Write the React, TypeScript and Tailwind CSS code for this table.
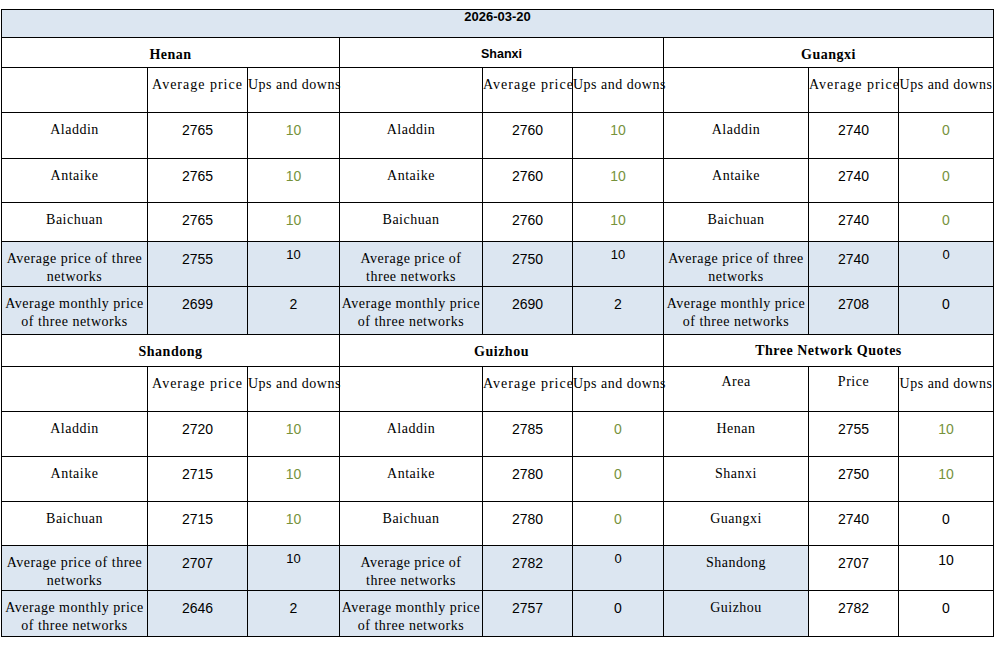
import type { ReactNode } from "react";

type Brand = { name: string; price: number; change: number; green: boolean };
type Region = {
    name: string;
    sans?: boolean;
    brands: Brand[];
    avg: { price: number; change: number };
    monthly: { price: number; change: number };
    avgLines: [string, string];
};

// SimSun-ish look: serif text spread a little
const serif = "font-['Liberation_Serif','Times_New_Roman',serif] text-[14px] leading-[18px] tracking-[0.5px]";
const num = "font-['Liberation_Sans',Arial,sans-serif] text-[14px] leading-[18px]";
const blue = "bg-[#dce6f1]";
const green = "text-[#76923c]";

const wide: [string, string] = ["Average price of three", "networks"];
const narrow: [string, string] = ["Average price of", "three networks"];

const top: Region[] = [
    {
        name: "Henan",
        brands: [
            { name: "Aladdin", price: 2765, change: 10, green: true },
            { name: "Antaike", price: 2765, change: 10, green: true },
            { name: "Baichuan", price: 2765, change: 10, green: true },
        ],
        avg: { price: 2755, change: 10 },
        monthly: { price: 2699, change: 2 },
        avgLines: wide,
    },
    {
        name: "Shanxi",
        sans: true,
        brands: [
            { name: "Aladdin", price: 2760, change: 10, green: true },
            { name: "Antaike", price: 2760, change: 10, green: true },
            { name: "Baichuan", price: 2760, change: 10, green: true },
        ],
        avg: { price: 2750, change: 10 },
        monthly: { price: 2690, change: 2 },
        avgLines: narrow,
    },
    {
        name: "Guangxi",
        brands: [
            { name: "Aladdin", price: 2740, change: 0, green: true },
            { name: "Antaike", price: 2740, change: 0, green: true },
            { name: "Baichuan", price: 2740, change: 0, green: true },
        ],
        avg: { price: 2740, change: 0 },
        monthly: { price: 2708, change: 0 },
        avgLines: wide,
    },
];

const bottom: Region[] = [
    {
        name: "Shandong",
        brands: [
            { name: "Aladdin", price: 2720, change: 10, green: true },
            { name: "Antaike", price: 2715, change: 10, green: true },
            { name: "Baichuan", price: 2715, change: 10, green: true },
        ],
        avg: { price: 2707, change: 10 },
        monthly: { price: 2646, change: 2 },
        avgLines: wide,
    },
    {
        name: "Guizhou",
        brands: [
            { name: "Aladdin", price: 2785, change: 0, green: true },
            { name: "Antaike", price: 2780, change: 0, green: true },
            { name: "Baichuan", price: 2780, change: 0, green: true },
        ],
        avg: { price: 2782, change: 0 },
        monthly: { price: 2757, change: 0 },
        avgLines: narrow,
    },
];

const quotes = [
    { area: "Henan", price: 2755, change: 10, green: true, shaded: false },
    { area: "Shanxi", price: 2750, change: 10, green: true, shaded: false },
    { area: "Guangxi", price: 2740, change: 0, green: false, shaded: false },
    { area: "Shandong", price: 2707, change: 10, green: false, shaded: true },
    { area: "Guizhou", price: 2782, change: 0, green: false, shaded: true },
];

function Td({ className = "", children, colSpan }: { className?: string; children?: ReactNode; colSpan?: number }) {
    return (
        <td colSpan={colSpan} className={`border border-black p-0 align-top text-center whitespace-nowrap ${className}`}>
            {children}
        </td>
    );
}

function Label({ children, shade = false }: { children: ReactNode; shade?: boolean }) {
    return <Td className={`${serif} pt-[8px] ${shade ? blue : ""}`}>{children}</Td>;
}

function Num({ children, shade = false, color = "" }: { children: ReactNode; shade?: boolean; color?: string }) {
    return <Td className={`${num} pt-[8px] ${color} ${shade ? blue : ""}`}>{children}</Td>;
}

function RegionHead({ r }: { r: Region }) {
    return (
        <Td
            colSpan={3}
            className={
                r.sans
                    ? "font-['Liberation_Sans',Arial,sans-serif] text-[12.5px] font-bold leading-[18px] pt-[7px]"
                    : `${serif} font-bold pt-[8px]`
            }
        >
            {r.name}
        </Td>
    );
}

function SubHead() {
    return (
        <>
            <Td />
            <Td className={`${serif} tracking-[1px] pt-[8px]`}>Average price</Td>
            <Label>Ups and downs</Label>
        </>
    );
}

function TwoLines({ lines, shade }: { lines: [string, string]; shade?: boolean }) {
    return (
        <Td className={`${serif} pt-[8px] ${shade ? blue : ""}`}>
            {lines[0]}
            <br />
            {lines[1]}
        </Td>
    );
}

function AvgCells({ r }: { r: Region }) {
    return (
        <>
            <TwoLines lines={r.avgLines} shade />
            <Num shade>{r.avg.price}</Num>
            <Td className={`font-['Liberation_Sans',Arial,sans-serif] text-[13px] leading-[16px] pt-[5px] ${blue}`}>
                {r.avg.change}
            </Td>
        </>
    );
}

function MonthlyCells({ r }: { r: Region }) {
    return (
        <>
            <TwoLines lines={["Average monthly price", "of three networks"]} shade />
            <Num shade>{r.monthly.price}</Num>
            <Num shade>{r.monthly.change}</Num>
        </>
    );
}

function BrandCells({ b }: { b: Brand }) {
    return (
        <>
            <Label>{b.name}</Label>
            <Num>{b.price}</Num>
            <Num color={b.green ? green : ""}>{b.change}</Num>
        </>
    );
}

export default function App() {
    const widths = [146, 100, 92, 143, 90, 91, 145, 90, 95];
    const brandHeightsTop = ["h-[46px]", "h-[44px]", "h-[39px]"];
    const brandHeightsBottom = ["h-[45px]", "h-[45px]", "h-[44px]"];

    return (
        <div className="min-h-screen bg-white pt-[9px] pl-[1px] text-black">
            <table className="table-fixed border-collapse w-[992px]">
                <colgroup>
                    {widths.map((w, i) => (
                        <col key={i} style={{ width: w }} />
                    ))}
                </colgroup>
                <tbody>
                    <tr className="h-[28px]">
                        <Td colSpan={9} className={`${blue} font-['Liberation_Sans',Arial,sans-serif] text-[13px] font-bold leading-[14px] pt-0`}>
                            2026-03-20
                        </Td>
                    </tr>
                    <tr className="h-[30px]">
                        {top.map((r) => (
                            <RegionHead key={r.name} r={r} />
                        ))}
                    </tr>
                    <tr className="h-[45px]">
                        <SubHead />
                        <SubHead />
                        <SubHead />
                    </tr>
                    {[0, 1, 2].map((i) => (
                        <tr key={`t${i}`} className={brandHeightsTop[i]}>
                            {top.map((r) => (
                                <BrandCells key={r.name} b={r.brands[i]} />
                            ))}
                        </tr>
                    ))}
                    <tr className="h-[45px]">
                        {top.map((r) => (
                            <AvgCells key={r.name} r={r} />
                        ))}
                    </tr>
                    <tr className="h-[48px]">
                        {top.map((r) => (
                            <MonthlyCells key={r.name} r={r} />
                        ))}
                    </tr>

                    <tr className="h-[32px]">
                        {bottom.map((r) => (
                            <RegionHead key={r.name} r={r} />
                        ))}
                        <Td colSpan={3} className={`${serif} font-bold pt-[7px]`}>
                            Three Network Quotes
                        </Td>
                    </tr>
                    <tr className="h-[45px]">
                        <SubHead />
                        <SubHead />
                        <Td className={`${serif} pt-[6px]`}>Area</Td>
                        <Td className={`${serif} pt-[6px]`}>Price</Td>
                        <Label>Ups and downs</Label>
                    </tr>
                    {[0, 1, 2].map((i) => (
                        <tr key={`b${i}`} className={brandHeightsBottom[i]}>
                            {bottom.map((r) => (
                                <BrandCells key={r.name} b={r.brands[i]} />
                            ))}
                            <Label>{quotes[i].area}</Label>
                            <Num>{quotes[i].price}</Num>
                            <Num color={quotes[i].green ? green : ""}>{quotes[i].change}</Num>
                        </tr>
                    ))}
                    <tr className="h-[45px]">
                        {bottom.map((r) => (
                            <AvgCells key={r.name} r={r} />
                        ))}
                        <Label shade={quotes[3].shaded}>{quotes[3].area}</Label>
                        <Num>{quotes[3].price}</Num>
                        <Td className={`${num} pt-[5px]`}>{quotes[3].change}</Td>
                    </tr>
                    <tr className="h-[46px]">
                        {bottom.map((r) => (
                            <MonthlyCells key={r.name} r={r} />
                        ))}
                        <Label shade={quotes[4].shaded}>{quotes[4].area}</Label>
                        <Num>{quotes[4].price}</Num>
                        <Num>{quotes[4].change}</Num>
                    </tr>
                </tbody>
            </table>
        </div>
    );
}
